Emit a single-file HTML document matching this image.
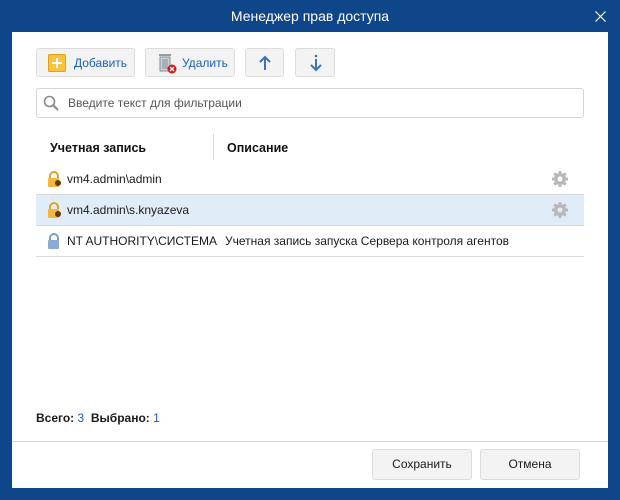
<!DOCTYPE html>
<html><head><meta charset="utf-8"><style>
*{box-sizing:border-box;margin:0;padding:0}
body{width:620px;height:500px;background:#0f4689;font-family:"Segoe UI","Liberation Sans","Noto Sans CJK SC",sans-serif;font-size:12px;color:#1a1a1a;position:relative;overflow:hidden}
.title{position:absolute;top:0;left:0;width:620px;height:32px;line-height:33px;text-align:center;color:#fff;font-size:14px}
.panel{position:absolute;left:12px;top:32px;width:596px;height:456px;background:#fff}
.btn{position:absolute;top:16px;height:29px;border:1px solid #dcdcdc;border-radius:3px;background:#f3f3f3;color:#1b5fb8}
.btn span{position:absolute;top:7px}
.search{position:absolute;left:24px;top:56px;width:548px;height:30px;border:1px solid #d6d6d6;border-radius:3px}
.search span{position:absolute;left:31px;top:7px;color:#555}
.hdr{position:absolute;top:109px;font-size:12.5px;color:#111;font-weight:bold}
.row{position:absolute;left:24px;width:548px;height:31px;border-bottom:1px solid #d8d8d8}
.row span{position:absolute;top:8px}
.gear{position:absolute;right:15px;top:6px}
.fbtn{position:absolute;top:417px;height:31px;border:1px solid #dcdcdc;border-radius:3px;background:#f3f3f3;text-align:center;line-height:29px}
</style></head><body>
<div class="title">Менеджер прав доступа</div>
<svg style="position:absolute;right:14px;top:11px" width="11" height="11"><path d="M0.5 0.5l10 10M10.5 0.5l-10 10" stroke="#fff" stroke-width="1.2"/></svg>
<div class="panel">
 <div class="btn" style="left:24px;width:99px">
  <svg style="position:absolute;left:11px;top:5px" width="18" height="18"><rect x="0.5" y="0.5" width="17" height="17" rx="1" fill="#f9c33a" stroke="#e0a21c"/><path d="M9 4v10M4 9h10" stroke="#fff" stroke-width="2"/></svg>
  <span style="left:37px">Добавить</span></div>
 <div class="btn" style="left:133px;width:90px">
  <svg style="position:absolute;left:10px;top:3px" width="22" height="22"><rect x="3" y="2" width="12" height="2" fill="#999"/><rect x="4" y="5" width="10" height="14" fill="#c9d0d8" stroke="#8a8f96"/><path d="M7 7v10M9 7v10M11 7v10" stroke="#8a8f96"/><circle cx="16" cy="17" r="4.5" fill="#d01919"/><path d="M14 15l4 4M18 15l-4 4" stroke="#fff" stroke-width="1.3"/></svg>
  <span style="left:36px">Удалить</span></div>
 <div class="btn" style="left:233px;width:39px"><svg style="position:absolute;left:11px;top:5px" width="16" height="18"><path d="M8 16V3M3 8l5-5 5 5" stroke="#3b72b8" stroke-width="2" fill="none"/></svg></div>
 <div class="btn" style="left:283px;width:40px"><svg style="position:absolute;left:12px;top:5px" width="16" height="18"><circle cx="8" cy="2" r="1.3" fill="#3b72b8"/><path d="M8 5v11M3 11l5 5 5-5" stroke="#3b72b8" stroke-width="2" fill="none"/></svg></div>
 <div class="search"><svg style="position:absolute;left:6px;top:6px" width="16" height="16"><circle cx="6.5" cy="6.5" r="5" stroke="#888" stroke-width="1.6" fill="none"/><path d="M10 10l5 5" stroke="#888" stroke-width="2"/></svg><span>Введите текст для фильтрации</span></div>
 <div class="hdr" style="left:38px">Учетная запись</div>
 <div style="position:absolute;left:201px;top:102px;width:1px;height:26px;background:#d8d8d8"></div>
 <div class="hdr" style="left:215px">Описание</div>
 <div class="row" style="top:132px"><svg style="position:absolute;left:10px;top:7px" width="16" height="16"><path d="M4 7V5a4 4 0 0 1 8 0v2" stroke="#e0a030" stroke-width="2" fill="none"/><rect x="2" y="7" width="11" height="9" rx="1" fill="#f5b73b"/><circle cx="12" cy="12" r="3" fill="#5a3c10"/></svg><span style="left:31px">vm4.admin\admin</span>
  <svg class="gear" width="18" height="18" viewBox="0 0 18 18"><g fill="#b8b8b8"><circle cx="9" cy="9" r="6"/><g stroke="#b8b8b8" stroke-width="3"><path d="M9 1v16M1 9h16M3.3 3.3l11.4 11.4M14.7 3.3L3.3 14.7"/></g></g><circle cx="9" cy="9" r="2.5" fill="#fff"/></svg></div>
 <div class="row" style="top:163px;background:#e0edf8"><svg style="position:absolute;left:10px;top:7px" width="16" height="16"><path d="M4 7V5a4 4 0 0 1 8 0v2" stroke="#e0a030" stroke-width="2" fill="none"/><rect x="2" y="7" width="11" height="9" rx="1" fill="#f5b73b"/><circle cx="12" cy="12" r="3" fill="#5a3c10"/></svg><span style="left:31px">vm4.admin\s.knyazeva</span>
  <svg class="gear" width="18" height="18" viewBox="0 0 18 18"><g fill="#b8b8b8"><circle cx="9" cy="9" r="6"/><g stroke="#b8b8b8" stroke-width="3"><path d="M9 1v16M1 9h16M3.3 3.3l11.4 11.4M14.7 3.3L3.3 14.7"/></g></g><circle cx="9" cy="9" r="2.5" fill="#e0edf8"/></svg></div>
 <div class="row" style="top:194px"><svg style="position:absolute;left:10px;top:7px" width="16" height="16"><path d="M4 7V5a4 4 0 0 1 8 0v2" stroke="#7f9cc4" stroke-width="2" fill="none"/><rect x="2" y="7" width="11" height="9" rx="1" fill="#8eaad3"/></svg><span style="left:31px">NT AUTHORITY\СИСТЕМА</span><span style="left:189px">Учетная запись запуска Сервера контроля агентов</span></div>
 <div style="position:absolute;left:24px;top:379px;font-weight:bold">Всего: <span style="color:#1b5fb8;font-weight:normal">3</span>&nbsp; Выбрано: <span style="color:#1b5fb8;font-weight:normal">1</span></div>
 <div style="position:absolute;left:0;top:409px;width:596px;height:1px;background:#d4d4d4"></div>
 <div class="fbtn" style="left:360px;width:100px">Сохранить</div>
 <div class="fbtn" style="left:468px;width:100px">Отмена</div>
</div>
</body></html>
